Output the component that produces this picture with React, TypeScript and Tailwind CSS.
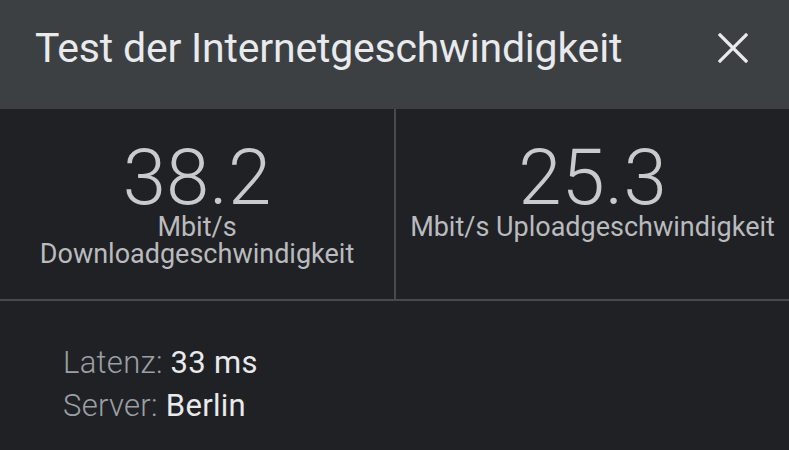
export default function App() {
  return (
    <div className="w-[789px] h-[450px] bg-[#202124] overflow-hidden" style={{ fontFamily: 'Roboto, "Noto Sans", sans-serif' }}>
      {/* Header */}
      <div className="h-[109px] bg-[#3c4043] flex items-start justify-between pl-[35px] pr-[41px] pt-[23px]">
        <h1 className="text-[41px] leading-[50px] text-[#e8eaed] font-normal tracking-[-0.2px]">
          Test der Internetgeschwindigkeit
        </h1>
        <svg width="30" height="30" viewBox="0 0 30 30" className="mt-[10px]">
          <path d="M2 2 L28 28 M28 2 L2 28" stroke="#e8eaed" strokeWidth="3.2" strokeLinecap="square" fill="none" />
        </svg>
      </div>

      {/* Speed cells */}
      <div className="grid grid-cols-[394px_2px_1fr] h-[190px]">
        <div className="flex flex-col items-center pt-[34px] text-center">
          <div className="text-[78px] leading-[70px] font-light text-[#c9cacc]">38.2</div>
          <div className="text-[27px] leading-[27px] text-[#b9bbbe] mt-[1px]">
            Mbit/s
            <br />
            Downloadgeschwindigkeit
          </div>
        </div>
        <div className="bg-[#47494c]" />
        <div className="flex flex-col items-center pt-[34px] text-center">
          <div className="text-[78px] leading-[70px] font-light text-[#c9cacc]">25.3</div>
          <div className="text-[27px] leading-[27px] text-[#b9bbbe] mt-[1px]">
            Mbit/s Uploadgeschwindigkeit
          </div>
        </div>
      </div>
      <div className="h-[2px] bg-[#47494c]" />

      {/* Details */}
      <div className="pl-[63px] pt-[46px] flex flex-col gap-[12px] text-[31px] leading-[31px] tracking-[0.3px]">
        <div>
          <span className="text-[#9aa0a6] font-light">Latenz: </span>
          <span className="text-[#e8eaed]">33 ms</span>
        </div>
        <div>
          <span className="text-[#9aa0a6] font-light">Server: </span>
          <span className="text-[#e8eaed]">Berlin</span>
        </div>
      </div>
    </div>
  );
}
